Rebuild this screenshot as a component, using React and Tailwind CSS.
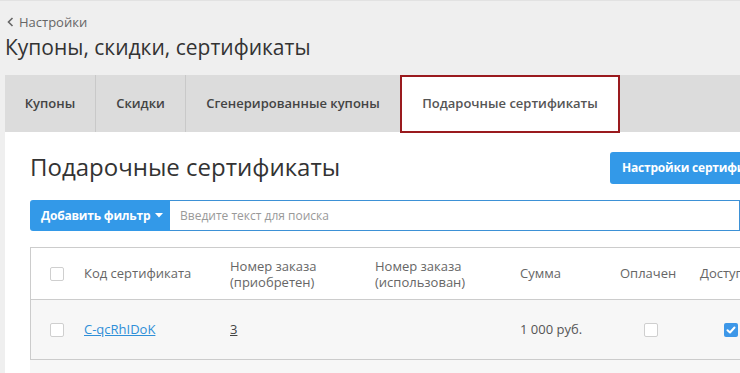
import React from "react";

const Checkbox = ({ checked }) =>
  checked ? (
    <span className="w-[14px] h-[14px] rounded-[2px] bg-[#3d97e8] flex items-center justify-center">
      <svg width="10" height="10" viewBox="0 0 10 10">
        <path d="M1.5 5.2 L4 7.5 L8.5 2.5" stroke="white" strokeWidth="2" fill="none" strokeLinecap="round" strokeLinejoin="round" />
      </svg>
    </span>
  ) : (
    <span className="w-[14px] h-[14px] rounded-[2px] border border-[#cfcfcf] bg-white block" />
  );

const tabs = ["Купоны", "Скидки", "Сгенерированные купоны"];

export default function App() {
  return (
    <div
      className="w-[740px] h-[373px] overflow-hidden bg-[#efefef] border-t border-[#e2e2e2]"
      style={{ fontFamily: '"Open Sans", "Noto Sans", sans-serif' }}
    >
      {/* Breadcrumb */}
      <div className="pl-[7px] pt-[12px] flex items-center gap-[5px] text-[13px] text-[#666] leading-[18px]">
        <svg width="7" height="10" viewBox="0 0 7 10">
          <path d="M5.5 1 L1.5 5 L5.5 9" stroke="#666" strokeWidth="1.6" fill="none" />
        </svg>
        Настройки
      </div>
      <h1 className="pl-[5px] mt-[2px] text-[21px] leading-[28px] text-[#333]">
        Купоны, скидки, сертификаты
      </h1>

      {/* Tabs */}
      <div className="ml-[5px] mt-[14px] h-[57px] bg-[#dcdcdc] flex">
        {tabs.map((t, i) => (
          <div
            key={t}
            className={`h-full flex items-center justify-center shrink-0 text-[13px] font-semibold text-[#444] ${
              i > 0 ? "border-l border-[#c9c9c9]" : ""
            }`}
            style={{ width: [90, 90, 215][i] }}
          >
            {t}
          </div>
        ))}
        <div className="w-[220px] shrink-0 h-[58px] bg-white border-2 border-[#9a1a1e] flex items-center justify-center text-[13px] font-semibold text-[#555] relative z-10">
          Подарочные сертификаты
        </div>
      </div>

      {/* Content */}
      <div className="ml-[5px] bg-white pl-[25px] h-[250px] overflow-hidden">
        <div className="flex items-start pt-[20px]">
          <h2 className="w-[580px] shrink-0 text-[24px] leading-[30px] text-[#333]">Подарочные сертификаты</h2>
          <button className="h-[32px] shrink-0 bg-[#3399e8] rounded-[3px] text-white text-[12px] font-bold tracking-[-0.2px] pl-[12px] pr-[20px] whitespace-nowrap">
            Настройки сертификатов
          </button>
        </div>

        {/* Filter */}
        <div className="flex mt-[16px] h-[31px]">
          <button className="w-[140px] shrink-0 h-full bg-[#3399e8] rounded-l-[3px] text-white text-[12px] font-bold tracking-[-0.2px] flex items-center pl-[11px] gap-[5px] whitespace-nowrap">
            Добавить фильтр
            <svg width="8" height="5" viewBox="0 0 8 5">
              <path d="M0 0 L8 0 L4 4.5 Z" fill="white" />
            </svg>
          </button>
          <div className="flex-1 border border-[#3d91d6] border-l-0 flex items-center pl-[10px] text-[12px] text-[#999]">
            Введите текст для поиска
          </div>
        </div>

        {/* Table */}
        <div className="mt-[16px] w-[760px] border-l border-t border-[#cccccc] text-[13px]">
          <div className="flex h-[52px] items-center text-[#666] border-b border-[#cccccc]">
            <div className="w-[53px] shrink-0 pl-[19px]"><Checkbox /></div>
            <div className="w-[146px] shrink-0">Код сертификата</div>
            <div className="w-[145px] shrink-0 leading-[16px]">Номер заказа<br />(приобретен)</div>
            <div className="w-[145px] shrink-0 leading-[16px]">Номер заказа<br />(использован)</div>
            <div className="w-[100px] shrink-0">Сумма</div>
            <div className="w-[80px] shrink-0">Оплачен</div>
            <div className="shrink-0 whitespace-nowrap">Доступен</div>
          </div>
          <div className="flex h-[60px] items-center bg-[#f7f7f7] text-[#555] border-b border-[#cccccc]">
            <div className="w-[53px] shrink-0 pl-[19px]"><Checkbox /></div>
            <div className="w-[146px] shrink-0">
              <span className="text-[#2f8fd8] underline">C-qcRhIDoK</span>
            </div>
            <div className="w-[145px] shrink-0">
              <span className="underline text-[#444]">3</span>
            </div>
            <div className="w-[145px] shrink-0" />
            <div className="w-[100px] shrink-0">1 000 руб.</div>
            <div className="w-[80px] shrink-0 pl-[24px]"><Checkbox /></div>
            <div className="shrink-0 pl-[24px]"><Checkbox checked /></div>
          </div>
        </div>
        <div className="h-[40px] bg-[#f7f7f7]" />
      </div>
    </div>
  );
}
